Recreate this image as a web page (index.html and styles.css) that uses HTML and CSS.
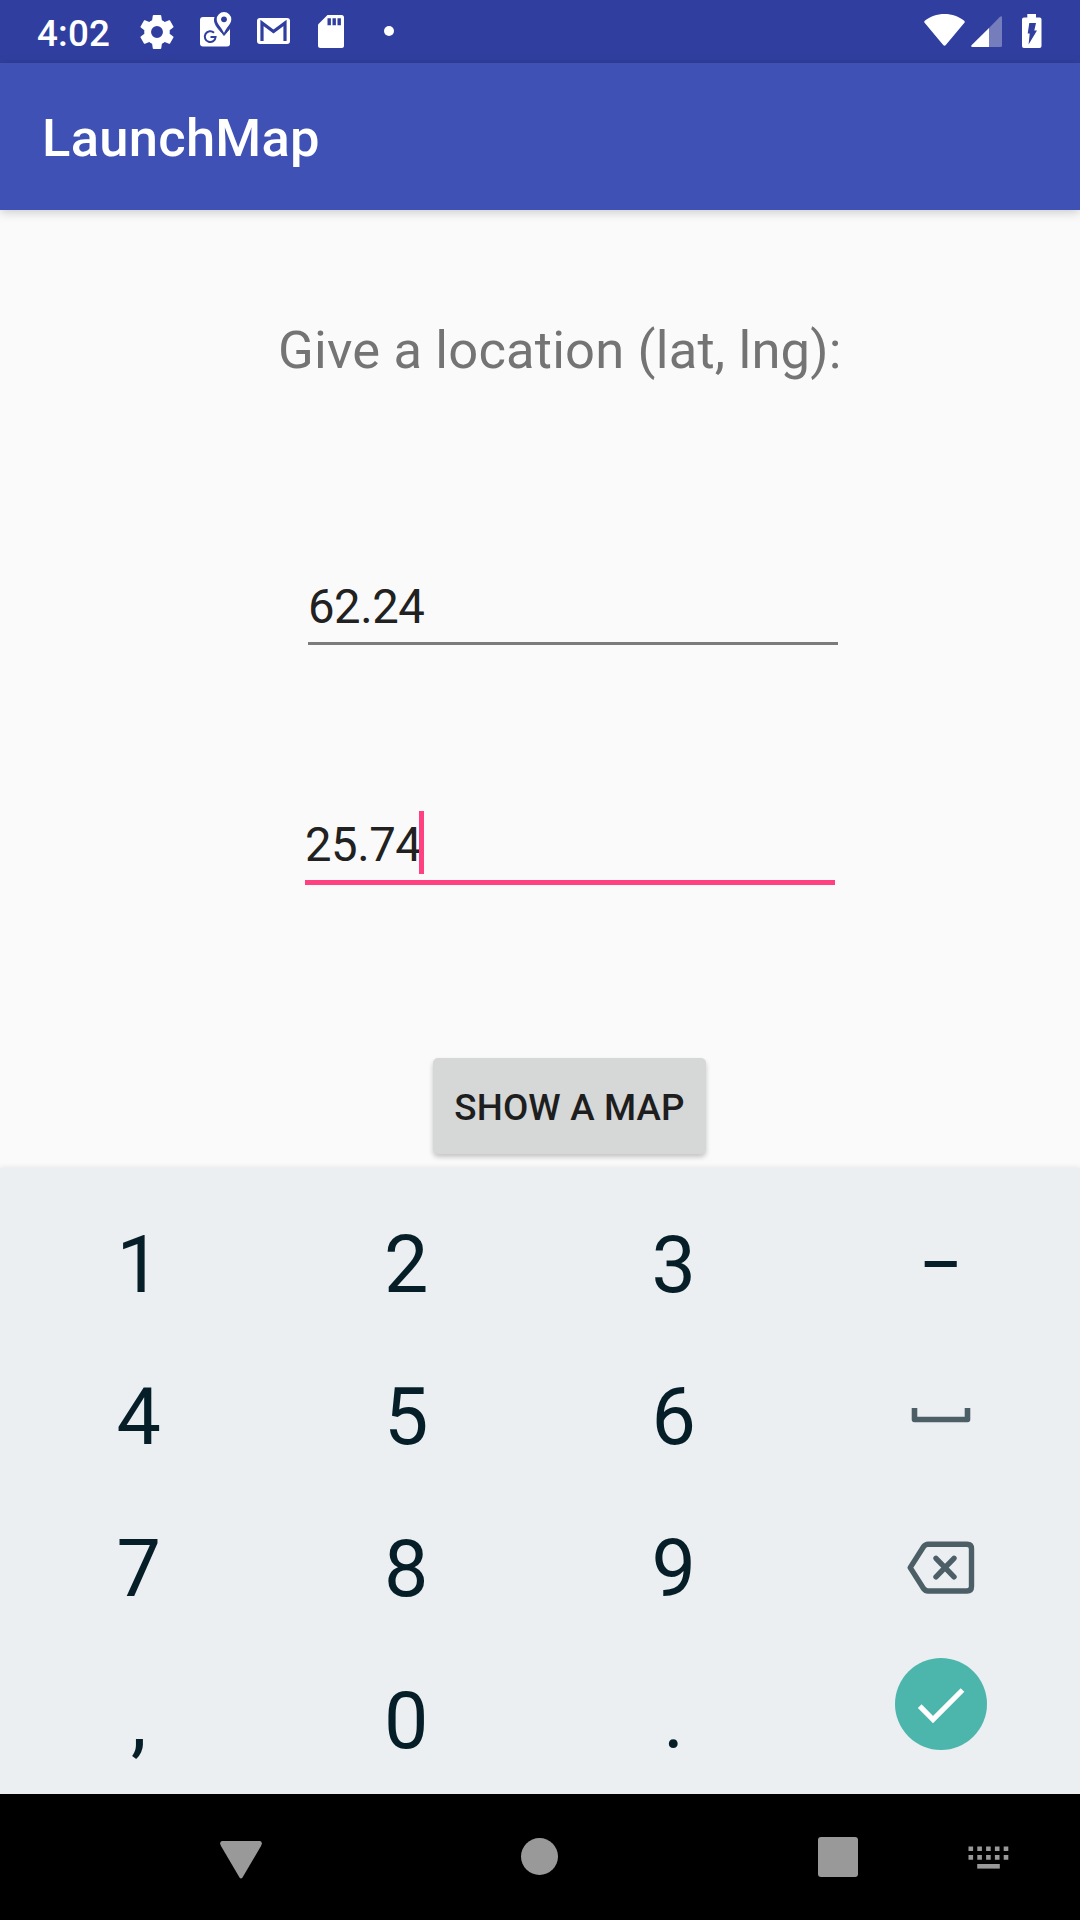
FILE: index.html
```html
<!DOCTYPE html>
<html lang="en">
<head>
<meta charset="utf-8">
<title>LaunchMap</title>
<link rel="stylesheet" href="styles.css">
</head>
<body>
<div class="screen">
  <header class="status">
    <span class="clock">4:02</span>
    <svg class="status-icon gear" width="34" height="34" viewBox="2 2 20 20"><path fill="#fff" d="M19.43 12.98c.04-.32.07-.64.07-.98s-.03-.66-.07-.98l2.11-1.65c.19-.15.24-.42.12-.64l-2-3.46c-.12-.22-.39-.3-.61-.22l-2.49 1c-.52-.4-1.08-.73-1.69-.98l-.38-2.65A.49.49 0 0 0 14 2h-4c-.25 0-.46.18-.49.42l-.38 2.65c-.61.25-1.17.59-1.69.98l-2.49-1c-.23-.09-.49 0-.61.22l-2 3.46c-.13.22-.07.49.12.64l2.11 1.65c-.04.32-.07.65-.07.98s.03.66.07.98l-2.11 1.65c-.19.15-.24.42-.12.64l2 3.46c.12.22.39.3.61.22l2.49-1c.52.4 1.08.73 1.69.98l.38 2.65c.03.24.24.42.49.42h4c.25 0 .46-.18.49-.42l.38-2.65c.61-.25 1.17-.59 1.69-.98l2.49 1c.23.09.49 0 .61-.22l2-3.46c.12-.22.07-.49-.12-.64zM12 15.5a3.5 3.5 0 1 1 0-7 3.5 3.5 0 0 1 0 7z"/></svg>
    <svg class="status-icon maps" width="32" height="36" viewBox="0 0 32 36">
      <rect x="0" y="5" width="30" height="29.500" rx="3" fill="#fff"/>
      <path d="M24 23.500C21 19 14.500 14.500 14.500 8A7.500 7.500 0 0 1 15.500 4H31V15C29 18 26 21 24 23.500Z" fill="#303f9f" stroke="#303f9f"/>
      <path d="M24 0a7.300 7.300 0 0 0-7.300 7.300C16.700 12 21 14.500 24 21c3-6.500 7.300-9 7.300-13.700A7.300 7.300 0 0 0 24 0z" fill="#fff"/>
      <circle cx="24" cy="7.300" r="2.900" fill="#303f9f"/>
      <path d="M14 20.800A5.400 5.400 0 1 0 15.600 25H10.500" fill="none" stroke="#303f9f" stroke-width="2"/>
    </svg>
    <svg class="status-icon mail" width="33" height="26" viewBox="0 0 33 26">
      <rect width="33" height="26" rx="3" fill="#fff"/>
      <path d="M5 23V5L16.500 13.500 28 5V23" fill="none" stroke="#303f9f" stroke-width="3.200"/>
    </svg>
    <svg class="status-icon card" width="26" height="33" viewBox="0 0 26 33">
      <path d="M9.500 0H23.500Q26 0 26 2.500V30.500Q26 33 23.500 33H2.500Q0 33 0 30.500V9.500Z" fill="#fff"/>
      <path d="M9.500 3.300h3.400v7H9.500zM14.500 3.300h3.400v7h-3.400zM19.500 3.300h3.400v7h-3.400z" fill="#303f9f"/>
    </svg>
    <span class="more"></span>
    <svg class="status-icon wifi" width="41" height="33" viewBox="0 0 41 33"><path fill="#fff" d="M.8 6.800C6 2.500 13 0 20.500 0S35 2.500 40.200 6.800q1 1 .2 2L21.800 31q-1.300 1.600-2.600 0L.6 8.800q-.8-1 .2-2z"/></svg>
    <svg class="status-icon cell" width="31" height="31" viewBox="0 0 31 31">
      <path d="M31 1.500V29.500Q31 31 29.500 31H18V12L29 .8Q31-.5 31 1.500Z" fill="#757dbd"/>
      <path d="M18 12V31H1.500Q-.5 31 .5 29.300Z" fill="#fff"/>
    </svg>
    <svg class="status-icon battery" width="20" height="34" viewBox="0 0 20 34">
      <path d="M5.300 0h8.700v3.500h3.700Q19.500 3.500 19.500 5.500V32q0 2-2 2H2q-2 0-2-2V5.500q0-2 2-2h3.300z" fill="#fff"/>
      <path d="M7.300 9H14L12.300 16.500H15L6.600 30.500 7.700 19.500H5.700Z" fill="#303f9f"/>
    </svg>
  </header>
  <div class="toolbar"><h1 class="title">LaunchMap</h1></div>
  <main class="form">
    <label class="prompt">Give a location (lat, lng):</label>
    <div class="field field-lat">62.24</div>
    <div class="field field-lng">25.74<span class="caret"></span></div>
    <button class="show">SHOW A MAP</button>
  </main>
  <section class="keyboard">
    <span class="key">1</span><span class="key">2</span><span class="key">3</span><span class="key"><span class="minus">–</span></span>
    <span class="key">4</span><span class="key">5</span><span class="key">6</span>
    <span class="key"><svg class="space" width="60" height="16" viewBox="0 0 60 16"><path d="M3.500 0V11.500H56.500V0" fill="none" stroke="#4c5f67" stroke-width="5.600" stroke-linejoin="round"/></svg></span>
    <span class="key">7</span><span class="key">8</span><span class="key">9</span>
    <span class="key"><svg class="backspace" width="68" height="54" viewBox="0 0 68 54" fill="none" stroke="#4c5f67" stroke-width="5.400" stroke-linejoin="round" stroke-linecap="round"><path d="M21 3.200H60Q64.500 3.200 64.500 7.700V45.500Q64.500 50 60 50H21Q18.500 50 16.500 47.500L3.200 26.600 16.500 5.700Q18.500 3.200 21 3.200Z"/><path d="M29 17.300 47 35.900M47 17.300 29 35.900"/></svg></span>
    <span class="key">,</span><span class="key">0</span><span class="key">.</span>
    <span class="key"><span class="enter"><svg width="92" height="92" viewBox="0 0 92 92"><path d="M24.700 48.200 38 61.500 67.500 32" fill="none" stroke="#fff" stroke-width="5.200"/></svg></span></span>
  </section>
  <nav class="navbar">
    <svg class="nav-back" width="42" height="38" viewBox="0 0 42 38"><path d="M2 0H40Q43 1 41 5L22.500 36.500Q21 38.500 19.500 36.500L1 5Q-1 1 2 0Z" fill="#999"/></svg>
    <span class="nav-home"></span>
    <span class="nav-recent"></span>
    <svg class="nav-ime" width="41" height="24" viewBox="0 0 41 24"><path d="M.5 2.700H41M.5 11.400H41" stroke="#999" stroke-width="4.600" stroke-dasharray="4.600 4.200"/><path d="M9.200 20.300H31.800" stroke="#999" stroke-width="4.600"/></svg>
  </nav>
</div>
</body>
</html>
```
FILE: styles.css
```css
* { box-sizing: border-box; }
body { margin: 0; font-family: Roboto, sans-serif; background: #fafafa; }
svg { display: block; flex: none; }
.screen { width: 1080px; height: 1920px; display: flex; flex-direction: column; overflow: hidden; }

.status { height: 63px; flex: none; background: #303f9f; color: #fff; display: flex; align-items: flex-start; padding-left: 37px; }
.clock { width: 103px; font-size: 36.75px; font-weight: 500; line-height: 43px; padding-top: 12px; letter-spacing: .2px; }
.gear { margin-top: 15px; }
.maps { margin: 12px 0 0 26px; }
.mail { margin: 18px 0 0 25px; }
.card { margin: 15px 0 0 28px; }
.more { width: 10px; height: 10px; border-radius: 50%; background: #fff; margin: 26px 0 0 40px; }
.wifi { margin: 14px 0 0 auto; }
.cell { margin: 16px 0 0 6px; }
.battery { margin: 14px 38px 0 20px; }

.toolbar { height: 147px; flex: none; background: #3f51b5; padding: 0 42px; display: flex; align-items: center; box-shadow: 0 2px 10px rgba(0,0,0,.2); }
.title { margin: 0; color: #fff; font-size: 52.5px; font-weight: 500; line-height: 62px; padding-top: 3px; letter-spacing: .28px; }

.form { height: 958px; flex: none; display: flex; flex-direction: column; align-items: flex-start; }
.prompt { margin: 108px 0 0 278px; font-size: 52.5px; line-height: 64px; color: #747474; white-space: nowrap; letter-spacing: .18px; }
.field { width: 530px; font-size: 47.25px; line-height: 56px; color: #212121; display: flex; letter-spacing: -.45px; }
.field-lat { height: 66px; margin: 197px 0 0 308px; border-bottom: 3px solid #7b7b7b; }
.field-lng { height: 68px; margin: 172px 0 0 305px; border-bottom: 5px solid #ff4081; }
.caret { width: 5px; height: 63px; background: #ff4081; margin: -6px 0 0 -2px; }
.show { width: 273px; height: 96px; margin: 173px 0 0 433px; padding: 4px 0 0; border: 0; border-radius: 5px; background: #d6d7d7; color: #1e1e1e; font: 500 36.75px/44px Roboto, sans-serif; letter-spacing: .15px; box-shadow: 0 3px 5px rgba(0,0,0,.22); white-space: nowrap; }

.keyboard { height: 626px; flex: none; background: #eceff1; color: #061e27; padding: 21px 5px 0; display: grid; grid-template-columns: repeat(4, 1fr); grid-auto-rows: 152px; box-shadow: 0 -1px 5px rgba(0,0,0,.08); }
.key { display: flex; align-items: center; justify-content: center; font-size: 79px; line-height: 94px; }
.minus { transform: scaleX(.83); }
.space { margin-top: -3px; }
.backspace { margin-top: -2px; }
.enter { width: 92px; height: 92px; border-radius: 50%; background: #4db6ac; margin-top: -34px; }

.navbar { height: 126px; flex: none; background: #000; display: flex; align-items: flex-start; padding-left: 220px; }
.nav-back { margin-top: 47px; }
.nav-home { width: 37px; height: 37px; margin: 44px 0 0 259px; border-radius: 50%; background: #999; }
.nav-recent { width: 40px; height: 40px; margin: 43px 0 0 260px; border-radius: 3px; background: #999; }
.nav-ime { margin: 52px 0 0 110px; }
```
